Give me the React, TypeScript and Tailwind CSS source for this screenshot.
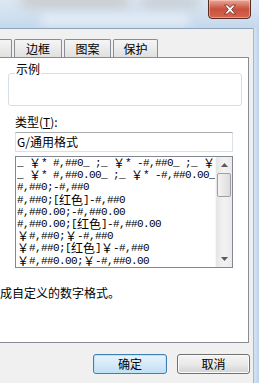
import React from 'react';

const ui = "font-['Noto_Sans_CJK_SC','Noto_Sans',sans-serif]";

const formats = [
  '_ ￥* #,##0_ ;_ ￥* -#,##0_ ;_ ￥* "-"_ ;_ @_ ',
  '_ ￥* #,##0.00_ ;_ ￥* -#,##0.00_ ;_ ￥* "-"??_ ;_ @_ ',
  '#,##0;-#,##0',
  '#,##0;[红色]-#,##0',
  '#,##0.00;-#,##0.00',
  '#,##0.00;[红色]-#,##0.00',
  '￥#,##0;￥-#,##0',
  '￥#,##0;[红色]￥-#,##0',
  '￥#,##0.00;￥-#,##0.00',
  '￥#,##0.00;[红色]￥-#,##0.00',
];

// SimSun-like cells: ascii is half width, CJK / fullwidth is a full 12px cell
const FormatText = ({ s }: { s: string }) => (
  <>
    {s.split(/([^\x00-\xff])/).map((part, i) =>
      i % 2 === 1 ? (
        <span key={i} className={`inline-block w-[12px] h-[12px] align-top text-[12px] leading-[12px] tracking-normal ${ui}`}>
          {part}
        </span>
      ) : part ? (
        <span key={i}>{part}</span>
      ) : null
    )}
  </>
);

const Tab = ({ label, className = '' }: { label: string; className?: string }) => (
  <div
    className={`h-[18px] shrink-0 border border-b-0 border-[#898c95] rounded-t-[2px] bg-gradient-to-b from-[#f5f5f5] to-[#e0e0e0] flex items-center justify-center text-[12px] leading-none ${className}`}
  >
    {label}
  </div>
);

const Arrow = ({ up }: { up?: boolean }) => (
  <svg width="7" height="4" viewBox="0 0 7 4">
    <path d={up ? 'M0 4 L3.5 0 L7 4 Z' : 'M0 0 L3.5 4 L7 0 Z'} fill="#5a5a5a" />
  </svg>
);

export default function App() {
  return (
    <div className={`w-[259px] h-[383px] overflow-hidden bg-[#c6d9ee] text-black ${ui}`}>
      {/* Aero title bar */}
      <div className="relative h-[28px] bg-gradient-to-b from-[#dde8f4] via-[#d2e1f0] to-[#c4d8ec] overflow-hidden">
        <div className="absolute left-[20px] top-[-8px] w-[110px] h-[16px] rounded-full bg-[#b7b2a8]/50 blur-[6px]" />
        <div className="absolute left-[140px] top-[-6px] w-[60px] h-[14px] rounded-full bg-[#a9a9a6]/40 blur-[6px]" />
        <div className="absolute left-[40px] top-[14px] w-[150px] h-[12px] rounded-full bg-[#e9f0f8]/80 blur-[5px]" />
        <div className="absolute right-[8px] top-[-1px] w-[43px] h-[20px] rounded-b-[4px] border border-[#5b2a22] bg-gradient-to-b from-[#e9a899] via-[#c8503d] to-[#d5664f] shadow-[inset_0_0_0_1px_rgba(255,220,210,0.45)] flex items-center justify-center">
          <svg width="14" height="11" viewBox="0 0 14 11">
            <path
              d="M1.5 1 L4.5 1 L7 3.6 L9.5 1 L12.5 1 L8.6 5.5 L12.5 10 L9.5 10 L7 7.4 L4.5 10 L1.5 10 L5.4 5.5 Z"
              fill="#fff"
              stroke="#6a2a22"
              strokeWidth="0.8"
            />
          </svg>
        </div>
      </div>

      <div className="flex h-[355px]">
        {/* Client area */}
        <div className="w-[253px] h-full bg-[#f0f0f0] border-t border-[#8fa3ba] flex flex-col">
          {/* Tabs */}
          <div className="mt-[10px] flex items-end gap-[2px] ml-[-40px]">
            <Tab label="字体" className="w-[52px]" />
            <Tab label="边框" className="w-[48px]" />
            <Tab label="图案" className="w-[47px]" />
            <Tab label="保护" className="w-[45px]" />
          </div>

          {/* Tab page */}
          <div className="ml-[-1px] w-[250px] h-[286px] border border-[#898c95] bg-white flex flex-col">
            {/* 示例 group box */}
            <div className="relative mt-[15px] ml-[8px] w-[234px] h-[33px] border border-[#d5dfe5] rounded-[3px]">
              <span className="absolute left-[6px] top-[-12px] bg-white px-[1px] text-[12px] leading-[14px]">示例</span>
            </div>

            <div className="mt-[9px] ml-[15px] h-[14px] text-[12px] leading-[14px]">
              类型(<span className="underline">T</span>):
            </div>

            <div className="mt-[3px] ml-[15px] w-[218px] h-[20px] border border-[#dbdfe6] border-t-[#abadb3] flex items-center pl-[1px] text-[12px] leading-none">
              G/通用格式
            </div>

            {/* Format list */}
            <div className="mt-[4px] ml-[15px] w-[218px] h-[112px] border border-[#828790] flex">
              <div className="flex-1 min-w-0 overflow-hidden pl-[1px] font-['Liberation_Mono',monospace] text-[11px] tracking-[-0.6px]">
                {formats.map((f) => (
                  <div key={f} className="h-[12.2px] leading-[12px] whitespace-nowrap overflow-hidden">
                    <FormatText s={f} />
                  </div>
                ))}
              </div>
              <div className="w-[17px] shrink-0 flex flex-col bg-gradient-to-r from-[#e6e6e6] via-[#f2f2f2] to-[#eaeaea] border-l border-[#f7f7f7]">
                <div className="h-[16px] flex items-center justify-center">
                  <Arrow up />
                </div>
                <div className="mx-[1px] h-[24px] rounded-[2px] border border-[#a0a0a0] bg-gradient-to-r from-[#f4f4f4] to-[#dcdcdc]" />
                <div className="flex-1" />
                <div className="h-[17px] flex items-center justify-center">
                  <Arrow />
                </div>
              </div>
            </div>

            <div className="mt-[18px] h-[14px] text-[12px] leading-[14px] whitespace-nowrap">成自定义的数字格式。</div>
          </div>

          {/* Buttons */}
          <div className="mt-[11px] flex justify-end gap-[10px] pr-[3px]">
            <button className="w-[74px] h-[20px] rounded-[3px] border border-[#3c7fb1] bg-gradient-to-b from-[#e8f3fc] via-[#d6eaf9] to-[#c2ddf2] shadow-[inset_0_0_0_1px_#bfe3f7] text-[12px] leading-none">
              确定
            </button>
            <button className="w-[73px] h-[20px] rounded-[3px] border border-[#707070] bg-gradient-to-b from-[#f4f4f4] via-[#eaeaea] to-[#d2d2d2] shadow-[inset_0_0_0_1px_#fbfbfb] text-[12px] leading-none">
              取消
            </button>
          </div>
        </div>

        {/* Right window frame */}
        <div className="w-[6px] h-full border-l border-[#a7b7c9] bg-gradient-to-r from-[#d6e4f2] to-[#bcd2ea]" />
      </div>
    </div>
  );
}
